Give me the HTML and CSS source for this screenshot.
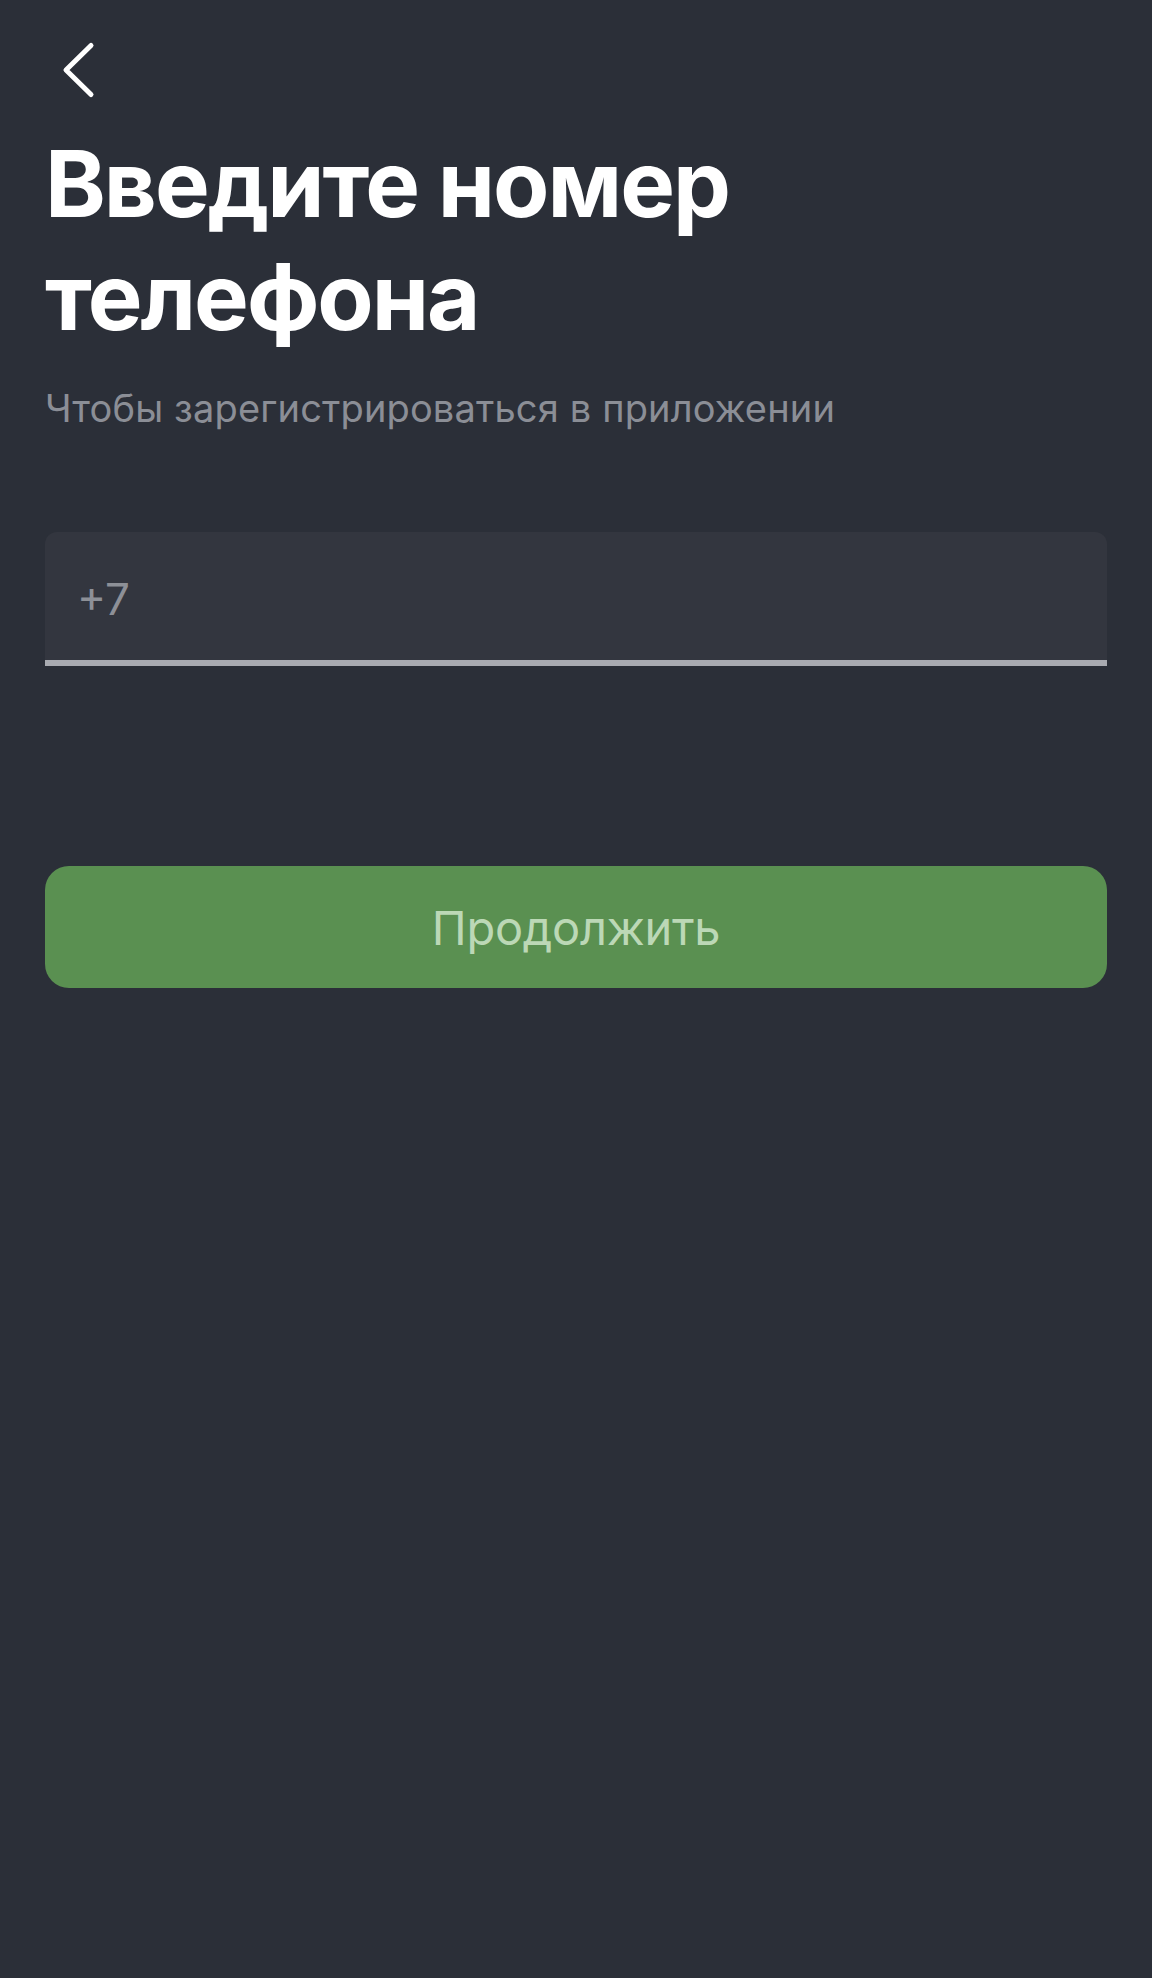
FILE: index.html
```html
<!DOCTYPE html>
<html lang="ru">
<head>
<meta charset="utf-8">
<title>Введите номер телефона</title>
<link rel="stylesheet" href="styles.css">
</head>
<body>
<main class="screen">
  <header class="nav">
    <button class="back" type="button" aria-label="Назад">
      <svg class="back-icon" width="40" height="60" viewBox="0 0 40 60" aria-hidden="true">
        <path d="M33 5.5 L8 30 L33 54.5" fill="none" stroke="#ffffff" stroke-width="5" stroke-linecap="round" stroke-linejoin="round"/>
      </svg>
    </button>
  </header>
  <h1 class="title">Введите номер<br>телефона</h1>
  <p class="subtitle">Чтобы зарегистрироваться в приложении</p>
  <div class="field">
    <span class="field-prefix">+7</span>
  </div>
  <button class="primary" type="button">Продолжить</button>
</main>
</body>
</html>
```

FILE: styles.css
```css
html, body {
  margin: 0;
  padding: 0;
  background: #2b2f38;
}

body {
  font-family: Inter, "Noto Sans", "Liberation Sans", sans-serif;
  color: #ffffff;
  min-height: 1978px;
}

.screen {
  display: flex;
  flex-direction: column;
  padding: 40px 45px 0 45px;
}

.nav {
  display: flex;
  height: 60px;
}

.back {
  margin: 0 0 0 13px;
  padding: 0;
  border: 0;
  background: none;
  width: 40px;
  height: 60px;
  display: block;
}

.back-icon {
  display: block;
}

.title {
  margin: 27px 0 0 0;
  font-size: 92px;
  line-height: 113px;
  font-weight: 700;
  letter-spacing: -2px;
  color: #ffffff;
}

.subtitle {
  margin: 32px 0 0 0;
  font-size: 38px;
  line-height: 46px;
  font-weight: 400;
  letter-spacing: 0.15px;
  color: #8b8e96;
}

.field {
  margin-top: 101px;
  background: #33363f;
  border-radius: 12px 12px 0 0;
  border-bottom: 6px solid #a9abb1;
  display: flex;
  align-items: flex-start;
  padding: 40px 32px 0 32px;
  box-sizing: border-box;
  height: 134px;
}

.field-prefix {
  font-size: 44px;
  line-height: 54px;
  color: #8d9097;
}

.primary {
  margin-top: 200px;
  height: 122px;
  border: 0;
  border-radius: 24px;
  background: #5a9051;
  color: #bcd8b6;
  font-family: Inter, "Noto Sans", "Liberation Sans", sans-serif;
  font-size: 47px;
  font-weight: 400;
  letter-spacing: -0.3px;
  display: flex;
  align-items: center;
  justify-content: center;
  padding: 0;
}
```
